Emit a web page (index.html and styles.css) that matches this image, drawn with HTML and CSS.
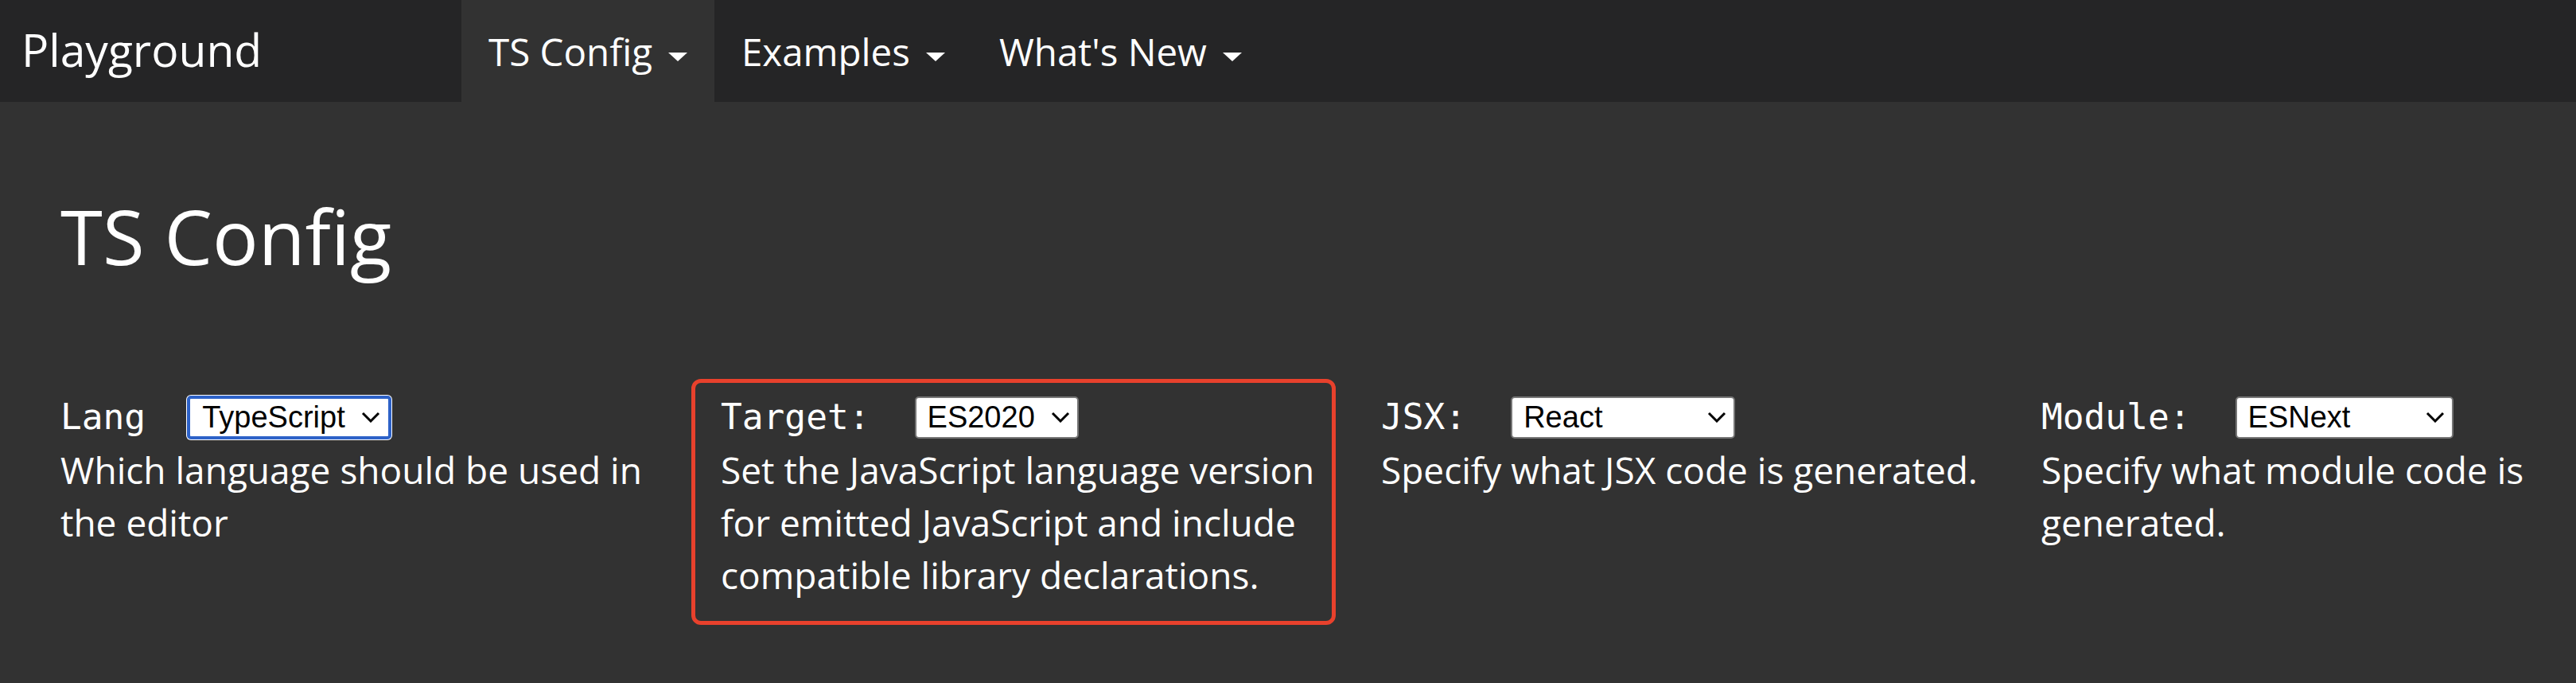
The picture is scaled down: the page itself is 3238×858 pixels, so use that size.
FILE: index.html
```html
<!DOCTYPE html>
<html lang="en">
<head>
<meta charset="utf-8">
<title>Playground - TS Config</title>
<link rel="stylesheet" href="styles.css">
</head>
<body>
<header class="topbar">
  <div class="brand">Playground</div>
  <nav class="menu">
    <a class="menu-item active">TS Config<span class="caret"></span></a>
    <a class="menu-item">Examples<span class="caret"></span></a>
    <a class="menu-item">What's New<span class="caret"></span></a>
  </nav>
</header>
<main class="page">
  <h1 class="title">TS Config</h1>
  <div class="options">
    <div class="option">
      <div class="option-head">
        <label class="option-label" for="lang">Lang</label>
        <span class="select-wrap wrap-lang">
          <select id="lang" class="option-select sel-lang"><option>TypeScript</option><option>JavaScript</option></select>
          <svg class="chev" viewBox="0 0 24 14"><path d="M2 2 L12 12 L22 2"/></svg>
        </span>
      </div>
      <p class="option-desc">Which language should be used in the editor</p>
    </div>
    <div class="option highlight">
      <div class="option-head">
        <label class="option-label" for="target">Target:</label>
        <span class="select-wrap">
          <select id="target" class="option-select sel-target"><option>ES2020</option></select>
          <svg class="chev" viewBox="0 0 24 14"><path d="M2 2 L12 12 L22 2"/></svg>
        </span>
      </div>
      <p class="option-desc">Set the JavaScript language version for emitted JavaScript and include compatible library declarations.</p>
    </div>
    <div class="option">
      <div class="option-head">
        <label class="option-label" for="jsx">JSX:</label>
        <span class="select-wrap">
          <select id="jsx" class="option-select sel-jsx"><option>React</option></select>
          <svg class="chev" viewBox="0 0 24 14"><path d="M2 2 L12 12 L22 2"/></svg>
        </span>
      </div>
      <p class="option-desc">Specify what JSX code is generated.</p>
    </div>
    <div class="option">
      <div class="option-head">
        <label class="option-label" for="module">Module:</label>
        <span class="select-wrap">
          <select id="module" class="option-select sel-module"><option>ESNext</option></select>
          <svg class="chev" viewBox="0 0 24 14"><path d="M2 2 L12 12 L22 2"/></svg>
        </span>
      </div>
      <p class="option-desc">Specify what module code is generated.</p>
    </div>
  </div>
</main>
</body>
</html>
```
FILE: styles.css
```css
html, body {
  margin: 0;
  padding: 0;
}
body {
  background: #323232;
  color: #fff;
  font-family: "Open Sans", "Noto Sans", sans-serif;
  min-height: 858px;
}

.topbar {
  display: flex;
  height: 128px;
  background: #252526;
}
.brand {
  width: 580px;
  box-sizing: border-box;
  padding-left: 27px;
  display: flex;
  align-items: center;
  padding-bottom: 4px;
  font-size: 57px;
  color: #fff;
}
.menu {
  display: flex;
}
.menu-item {
  display: flex;
  align-items: center;
  gap: 20px;
  padding: 0 34px;
  font-size: 47.5px;
  color: #fff;
  text-decoration: none;
  cursor: pointer;
}
.menu-item.active {
  background: #323232;
}
.caret {
  width: 0;
  height: 0;
  border-left: 12.5px solid transparent;
  border-right: 12.5px solid transparent;
  border-top: 11px solid #fff;
  margin-top: 14px;
}

.page {
  padding: 110px 30px 0 76px;
}
.title {
  margin: 0;
  font-size: 96px;
  font-weight: 400;
  line-height: 1.2;
}

.options {
  margin-top: 138px;
  display: grid;
  grid-template-columns: 770px 770px 770px minmax(0, 1fr);
  column-gap: 60px;
  align-items: start;
}
.option.highlight {
  border: 5px solid #e8412c;
  border-radius: 12px;
  margin: -15px -3px -30px -37px;
  padding: 10px 8px 25px 32px;
}
.option-head {
  display: flex;
  align-items: center;
  height: 66px;
}
.option-label {
  font-family: "DejaVu Sans Mono", "Liberation Mono", monospace;
  font-size: 44.5px;
  line-height: 66px;
  color: #fff;
}
.select-wrap {
  position: relative;
  display: inline-flex;
  margin-left: 56px;
}
.select-wrap.wrap-lang {
  margin-left: 52px;
}
.option-select {
  appearance: none;
  -webkit-appearance: none;
  box-sizing: border-box;
  height: 53px;
  border: 2px solid #767676;
  border-radius: 5px;
  background: #fff;
  color: #000;
  font-family: "Liberation Sans", Arial, sans-serif;
  font-size: 38px;
  padding: 0 0 0 14px;
  margin: 0;
}
.sel-lang {
  width: 257px;
  height: 55px;
  border: 4px solid #2d62c8;
  box-shadow: 0 0 0 1px #fff;
  padding-left: 15px;
}
.sel-target { width: 206px; }
.sel-jsx { width: 282px; }
.sel-module { width: 274px; }

.chev {
  position: absolute;
  right: 11px;
  top: 19px;
  width: 24px;
  height: 14px;
  pointer-events: none;
}
.wrap-lang .chev {
  right: 14px;
  top: 20px;
}
.chev path {
  fill: none;
  stroke: #000;
  stroke-width: 3;
}

.option-desc {
  margin: 0;
  font-size: 46px;
  line-height: 66px;
  color: #fff;
}
```
